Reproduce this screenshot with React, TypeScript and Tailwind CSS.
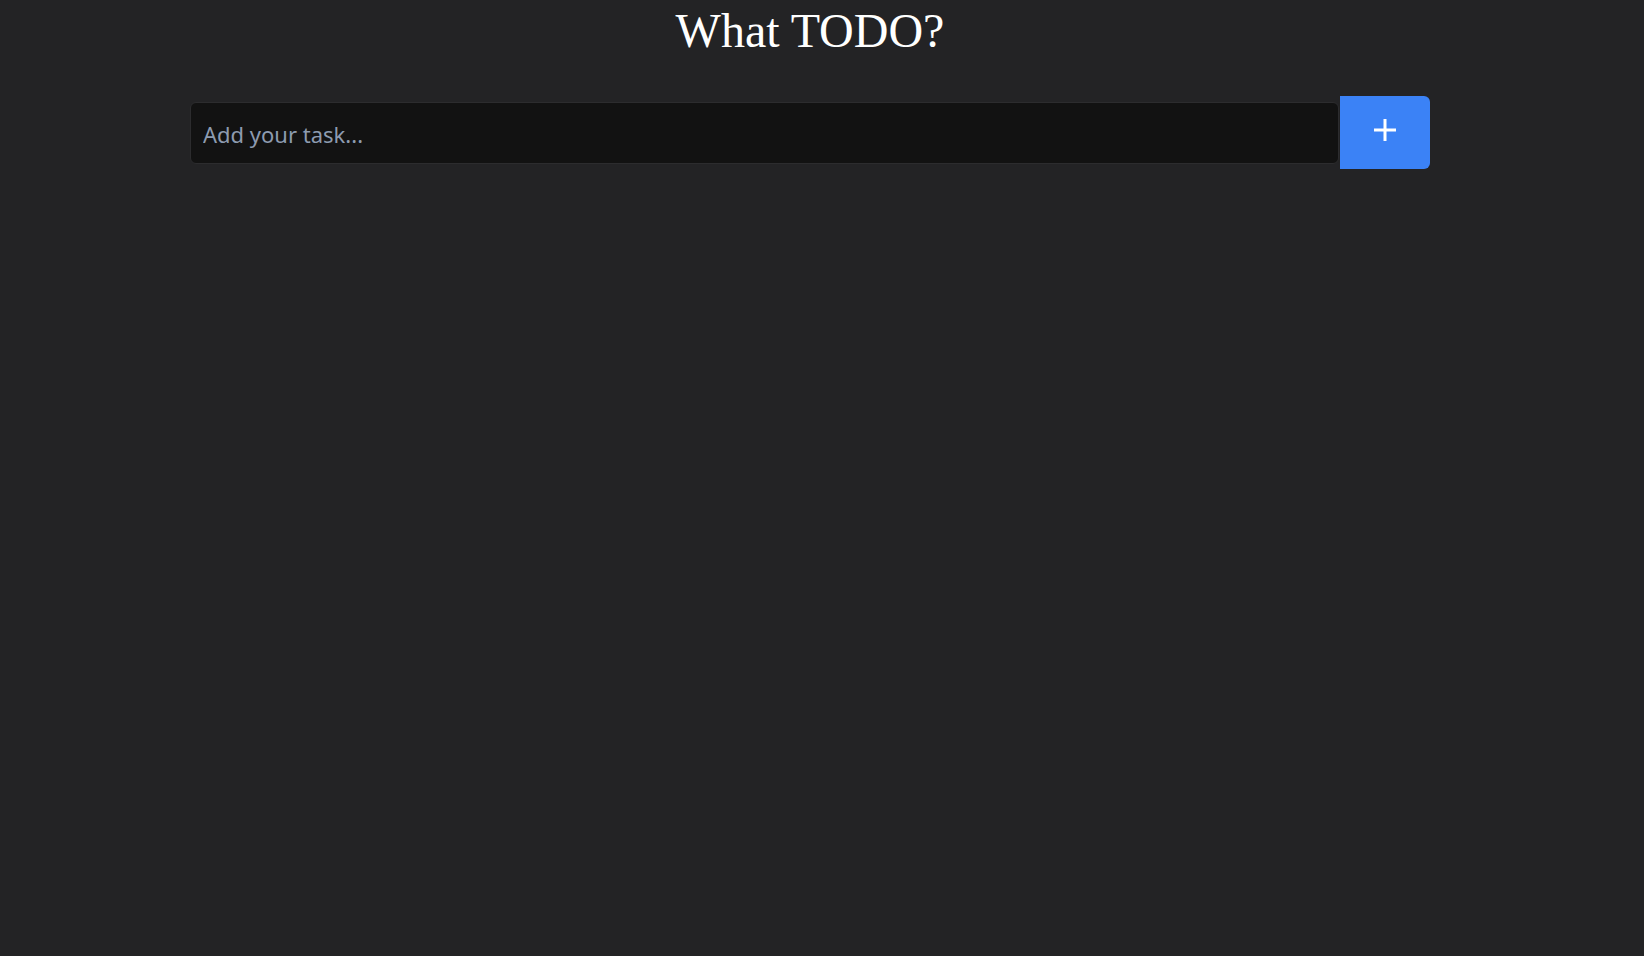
import React, { useState } from "react";

export default function App() {
  const [task, setTask] = useState("");

  return (
    <main className="min-h-[956px] w-full bg-[#232325] pt-[3px]">
      <div className="ml-[190px] w-[1240px]">
        <h1
          className="text-center text-[48px] leading-[56px] text-white"
          style={{ fontFamily: '"Liberation Serif", Georgia, serif' }}
        >
          What TODO?
        </h1>
        <div className="mt-[37px] flex items-center">
          <input
            value={task}
            onChange={(e) => setTask(e.target.value)}
            placeholder="Add your task..."
            className="h-[62px] flex-1 rounded-md border border-[#2c2c2e] bg-[#121212] px-3 pt-[3px] text-[22px] text-white outline-none placeholder:text-[#8d9bb0]"
            style={{ fontFamily: '"Noto Sans", "Open Sans", sans-serif' }}
          />
          <button className="ml-px flex h-[73px] w-[90px] items-center justify-center rounded-r-md bg-[#3b82f6]">
            <svg width="24" height="24" viewBox="0 0 24 24" className="-mt-[6px]">
              <path d="M12 1v22M1 12h22" stroke="white" strokeWidth="3" />
            </svg>
          </button>
        </div>
      </div>
    </main>
  );
}
